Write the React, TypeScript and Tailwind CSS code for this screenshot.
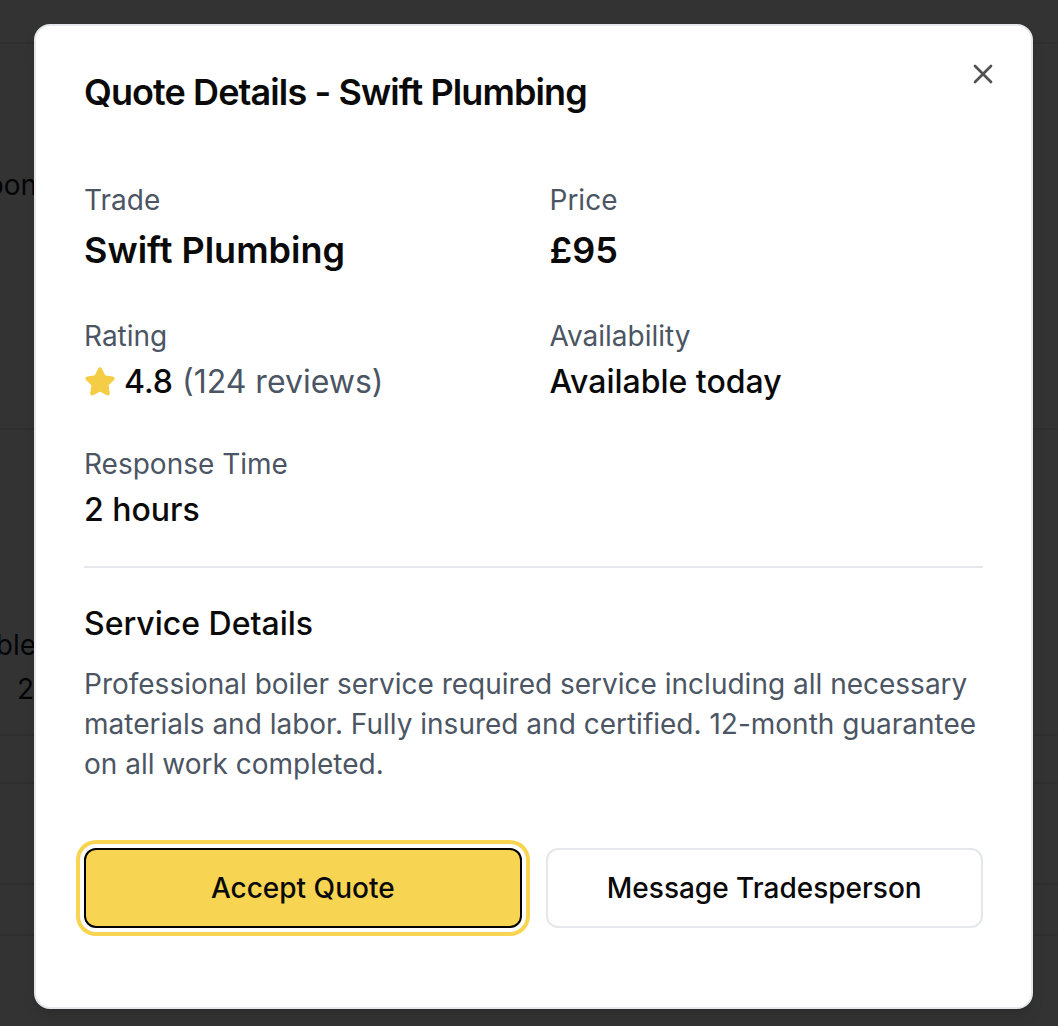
import { X, Star } from 'lucide-react';

function BackgroundPage() {
  return (
    <div className="min-h-screen bg-white text-gray-900 flex flex-col">
      <div className="h-[44px] border-b-2 border-gray-200" />
      <div className="h-[386px] border-b-2 border-gray-200 pt-[121px]">
        <div className="w-[37px] flex justify-end whitespace-nowrap text-[28px] leading-[40px]">Afternoon</div>
      </div>
      <div className="h-[306px] border-b-2 border-gray-200 pt-[195px]">
        <div className="w-[36px] flex justify-end whitespace-nowrap text-[28px] leading-[40px]">Available</div>
        <div className="w-[34px] flex justify-end whitespace-nowrap text-[28px] leading-[48px]">2</div>
      </div>
      <div className="h-[48px] border-b-2 border-gray-200" />
      <div className="h-[101px] border-b-2 border-gray-200" />
      <div className="h-[51px] border-b-2 border-gray-200" />
      <div className="flex-1" />
    </div>
  );
}

function Field({ label, children }: { label: string; children: React.ReactNode }) {
  return (
    <div className="flex flex-col">
      <span className="text-[28px] leading-[40px] text-[#4b5563]">{label}</span>
      <div className="mt-[2px]">{children}</div>
    </div>
  );
}

export default function App() {
  return (
    <div className="relative min-h-screen font-['Inter',sans-serif] overflow-hidden">
      <BackgroundPage />
      <div className="absolute inset-0 bg-black/80" />

      <div className="absolute left-[34px] top-[24px] w-[999px] bg-white border-2 border-[#e5e7eb] rounded-[16px] shadow-lg px-[48px] pt-[48px] pb-[79px] text-[#0a0a0a]">
        <button className="absolute right-[32px] top-[32px] w-[32px] h-[32px] flex items-center justify-center opacity-70">
          <X className="w-[32px] h-[32px]" strokeWidth={2} />
        </button>

        <h2 className="text-[36px] leading-none font-semibold tracking-tight">Quote Details - Swift Plumbing</h2>

        <div className="mt-[70px] grid grid-cols-2 gap-x-[32px] gap-y-[38px]">
          <Field label="Trade">
            <span className="text-[36px] leading-[56px] font-semibold">Swift Plumbing</span>
          </Field>
          <Field label="Price">
            <span className="text-[36px] leading-[56px] font-semibold">£95</span>
          </Field>
          <Field label="Rating">
            <div className="flex items-center gap-[8px] text-[32px] leading-[48px]">
              <Star className="w-[32px] h-[32px] fill-[#f5cc45] text-[#f5cc45]" />
              <span>
                <span className="font-medium">4.8</span>{' '}
                <span className="text-[#4b5563]">(124 reviews)</span>
              </span>
            </div>
          </Field>
          <Field label="Availability">
            <span className="text-[32px] leading-[48px] font-medium">Available today</span>
          </Field>
          <Field label="Response Time">
            <span className="text-[32px] leading-[48px] font-medium">2 hours</span>
          </Field>
        </div>

        <div className="mt-[32px] border-t-2 border-[#e5e7eb] pt-[32px]">
          <h3 className="text-[32px] leading-[48px] font-medium">Service Details</h3>
          <p className="mt-[16px] text-[28px] leading-[40px] text-[#4b5563]">
            Professional boiler service required service including all necessary materials and labor. Fully insured and certified. 12-month guarantee on all work completed.
          </p>
        </div>

        <div className="mt-[64px] grid grid-cols-2 gap-[24px]">
          <button className="h-[80px] rounded-[12px] border-2 border-black bg-[#f7d552] ring-4 ring-[#f7d552] ring-offset-4 ring-offset-white text-[28px] font-medium text-[#0a0a0a]">
            Accept Quote
          </button>
          <button className="h-[80px] rounded-[12px] border-2 border-[#e5e7eb] bg-white text-[28px] font-medium text-[#0a0a0a]">
            Message Tradesperson
          </button>
        </div>
      </div>
    </div>
  );
}
